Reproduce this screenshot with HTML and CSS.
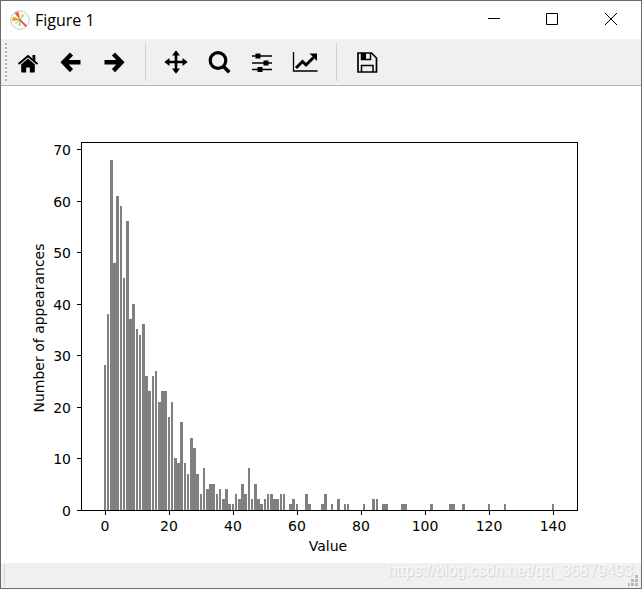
FILE: index.html
```html
<!DOCTYPE html>
<html lang="en">
<head>
<meta charset="utf-8">
<title>Figure 1</title>
<link rel="stylesheet" href="styles.css">
</head>
<body>
<div class="window">
  <header class="titlebar">
    <svg class="app-icon" width="20" height="20" viewBox="0 0 20 20" aria-hidden="true">
      <circle cx="10" cy="10" r="9.300" fill="#fdfdfd" stroke="#c3c6c9"/>
      <path d="M10 10 4.500 3 8.500 1.500Z" fill="#e9662c"/>
      <path d="M11 10 2 11 3 6.500Z" fill="#f5a010"/>
      <path d="M10 10 12 4 14.500 5.500Z" fill="#cdd84a"/>
      <path d="M10 9 8.500 15.500 11 15.500Z" fill="#86d69c"/>
      <path d="M10 10 5 12.500 6 14Z" fill="#e6d25a"/>
      <path d="M9.500 10.500 15.500 17 17 15.500 10.500 9.500Z" fill="#e8531f"/>
      <circle cx="10" cy="10" r="1.300" fill="#6c8a80"/>
    </svg>
    <h1 class="title">Figure 1</h1>
    <div class="window-buttons">
      <button type="button" aria-label="Minimize"><svg width="15" height="14" viewBox="0 0 15 14"><path d="M3 5h12v1H3z"/></svg></button>
      <button type="button" aria-label="Maximize"><svg width="15" height="14" viewBox="0 0 15 14"><path d="M2.500 .5h11v11h-11z" fill="none" stroke="#000"/></svg></button>
      <button type="button" aria-label="Close"><svg width="15" height="14" viewBox="0 0 15 14"><path d="M2 0 14 12M14 0 2 12" fill="none" stroke="#000"/></svg></button>
    </div>
  </header>

  <nav class="toolbar" aria-label="Figure tools">
    <span class="handle"></span>
    <button type="button" aria-label="Home"><svg width="24" height="24" viewBox="0 0 24 24"><path d="M12 8.500 18.800 14.300V21.500a1 1 0 0 1-1 1h-4v-5h-3.600v5h-4a1 1 0 0 1-1-1v-7.200z"/><path d="M2.500 14 12 6 21.500 14" fill="none" stroke="#000" stroke-width="2"/><path d="M16.500 5H19.300v7l-2.800-2.400z"/></svg></button>
    <button type="button" aria-label="Back"><svg width="24" height="24" viewBox="0 0 24 24"><path d="M12.500 4 4.500 12.300l8 8.300M5 12.300h16.500" fill="none" stroke="#000" stroke-width="4.400"/></svg></button>
    <button type="button" aria-label="Forward"><svg width="24" height="24" viewBox="0 0 24 24"><path d="M11.500 4 19.500 12.300l-8 8.300M19 12.300H2.500" fill="none" stroke="#000" stroke-width="4.400"/></svg></button>
    <span class="separator"></span>
    <button type="button" aria-label="Pan"><svg width="24" height="24" viewBox="0 0 24 24"><path d="M12 2v20M2 12h20" fill="none" stroke="#000" stroke-width="2.600"/><path d="M12 .3 16 5.500H8zM12 23.700 8 18.500h8zM.3 12 5.500 8v8zM23.700 12 18.500 16V8z"/></svg></button>
    <button type="button" aria-label="Zoom"><svg width="24" height="24" viewBox="0 0 24 24"><circle cx="11" cy="10.500" r="7.800" fill="none" stroke="#000" stroke-width="3.200"/><path d="m16 16 6.300 6.300" fill="none" stroke="#000" stroke-width="3.600"/></svg></button>
    <button type="button" aria-label="Configure subplots"><svg width="24" height="24" viewBox="0 0 24 24"><path d="M2 6h20M2 13h20M2 19.500h20" fill="none" stroke="#000" stroke-width="1.400"/><path d="M5.500 3.500h5v5h-5zM13.500 10.500h5v5h-5zM7.500 17h5v5h-5z"/></svg></button>
    <button type="button" aria-label="Edit axes"><svg width="26" height="24" viewBox="0 0 26 24"><path d="M1.500 2v19H25.500" fill="none" stroke="#000" stroke-width="1.300"/><path d="m4 18 6.500-6.500 3.500 3.500 7.500-7.500" fill="none" stroke="#000" stroke-width="3"/><path d="M17.500 3.500H25V11z"/></svg></button>
    <span class="separator"></span>
    <button type="button" aria-label="Save"><svg width="24" height="24" viewBox="0 0 24 24"><path d="M3 3h13.500L21.500 8V22H3z" fill="none" stroke="#000" stroke-width="1.700"/><path d="M6.500 3v6.500h9V3M6.500 22v-6.500h11.500V22" fill="none" stroke="#000" stroke-width="1.500"/><path d="M6 3h5v6H6z"/></svg></button>
  </nav>

  <main class="canvas">
    <svg class="chart" viewBox="0 0 640 477" role="img" aria-label="Histogram of number of appearances by value">
      <g id="bars" class="bars"></g>
      <g id="ticks" class="ticks"></g>
      <path class="axes" d="M80 56h497v369H80zM81 57v367h495V57z"/>
      <text class="label" x="327" y="465">Value</text>
      <text class="label" transform="translate(43 242) rotate(-90)">Number of appearances</text>
    </svg>
  </main>

  <footer class="statusbar">
    <span class="status-line"></span>
    <a class="watermark" href="https://blog.csdn.net/qq_36879493">https://blog.csdn.net/qq_36879493</a>
    <svg class="grip" width="10" height="11" viewBox="0 0 10 11" aria-hidden="true"><path d="M7 0h3v3H7zM7 4h3v3H7zM7 8h3v3H7zM3 4h3v3H3zM3 8h3v3H3zM0 8h2v3H0z"/></svg>
  </footer>
</div>
<script src="chart.js"></script>
</body>
</html>
```
FILE: styles.css
```css
* {
  box-sizing: border-box;
}

body {
  margin: 0;
  background: #fff;
  color: #000;
}

.window {
  display: flex;
  flex-direction: column;
  min-height: 100vh;
  border: 1px solid #6b6b6d;
}

.titlebar {
  display: flex;
  align-items: center;
  height: 38px;
  padding-left: 9px;
  background: #fff;
}

.title {
  margin: 0 auto 0 5px;
  font: 400 16px/20px "Open Sans", "Noto Sans", sans-serif;
}

.window-buttons {
  display: flex;
  align-self: stretch;
  padding-right: 1px;
}

button {
  display: flex;
  align-items: center;
  justify-content: center;
  padding: 0;
  border: 0;
  background: transparent;
}

.window-buttons button {
  width: 59px;
}

.toolbar {
  display: flex;
  align-items: center;
  height: 47px;
  padding-left: 4px;
  background: #f0f0f0;
  border-bottom: 1px solid #b8b8b8;
}

.toolbar button {
  width: 43px;
  height: 42px;
  padding-right: 2px;
}

.handle {
  width: 2px;
  height: 39px;
  background: repeating-linear-gradient(#b0b0b0 0 2px, #f8f8f8 2px 4px);
}

.separator {
  width: 1px;
  height: 38px;
  margin: 0 9px;
  background: #cfcfcf;
}

.canvas {
  display: flex;
  flex: 1;
  background: #fff;
}

.chart {
  display: block;
  width: 100%;
  font: 14px "DejaVu Sans", sans-serif;
}

.bars {
  fill: #808080;
  shape-rendering: crispEdges;
}

.axes {
  fill-rule: evenodd;
}

.label,
.x-tick {
  text-anchor: middle;
}

.y-tick {
  text-anchor: end;
}

.statusbar {
  display: flex;
  align-items: center;
  height: 25px;
  padding: 0 3px;
  background: #f0f0f0;
}

.status-line {
  width: 1px;
  height: 21px;
  margin-right: auto;
  background: #d4d4d4;
}

.watermark {
  align-self: flex-start;
  color: #f8f8f8;
  font: 16px/16px "Liberation Sans", Arial, sans-serif;
  text-decoration: none;
  text-shadow: 1px 1px 1px #d0d0d0;
}

.grip {
  align-self: flex-end;
  margin: 0 0 2px -5px;
  fill: #b9b9b9;
}
```
FILE: chart.js
```javascript
// Appearances of each value, starting at 0.
const counts = [
  28, 38, 68, 48, 61, 59, 45, 56, 37, 40, 35, 34, 36, 26, 23, 26, 27, 21, 23, 23,
  18, 21, 10, 9, 17, 9, 7, 14, 12, 7, 3, 8, 4, 5, 5, 3, 4, 2, 4, 1,
  1, 3, 2, 5, 3, 8, 2, 5, 2, 1, 2, 3, 3, 2, 2, 3, 3, 0, 1, 2,
  1, 0, 0, 3, 1, 0, 0, 0, 1, 3, 0, 1, 0, 2, 0, 1, 1
];
const sparse = {
  81: 1, 84: 2, 85: 2, 87: 1, 88: 1, 93: 1, 94: 1, 102: 1,
  108: 1, 109: 1, 112: 1, 120: 1, 125: 1, 140: 1
};

const axisY = 424;
const xOf = value => 103.9 + value * 3.2;
const yOf = count => Math.round(423.6 - count * 5.147);

function add(parent, name, attributes, text) {
  const node = document.createElementNS("http://www.w3.org/2000/svg", name);
  for (const key in attributes) node.setAttribute(key, attributes[key]);
  if (text !== undefined) node.textContent = text;
  parent.append(node);
}

const bars = document.getElementById("bars");
const ticks = document.getElementById("ticks");

function addBar(value, count) {
  const left = Math.round(xOf(value) - 1.28);
  const right = Math.round(xOf(value) + 1.28);
  const top = yOf(count);
  add(bars, "rect", { x: left, y: top, width: right - left, height: axisY - top });
}

counts.forEach((count, value) => {
  if (count) addBar(value, count);
});
for (const value in sparse) addBar(Number(value), sparse[value]);

for (let value = 0; value <= 140; value += 20) {
  const x = Math.round(xOf(value));
  add(ticks, "rect", { x, y: axisY, width: 1, height: 5 });
  add(ticks, "text", { class: "x-tick", x, y: 445 }, value);
}
for (let count = 0; count <= 70; count += 10) {
  const y = yOf(count);
  add(ticks, "rect", { x: 76, y, width: 5, height: 1 });
  add(ticks, "text", { class: "y-tick", x: 70, y: y + 6 }, count);
}
```
